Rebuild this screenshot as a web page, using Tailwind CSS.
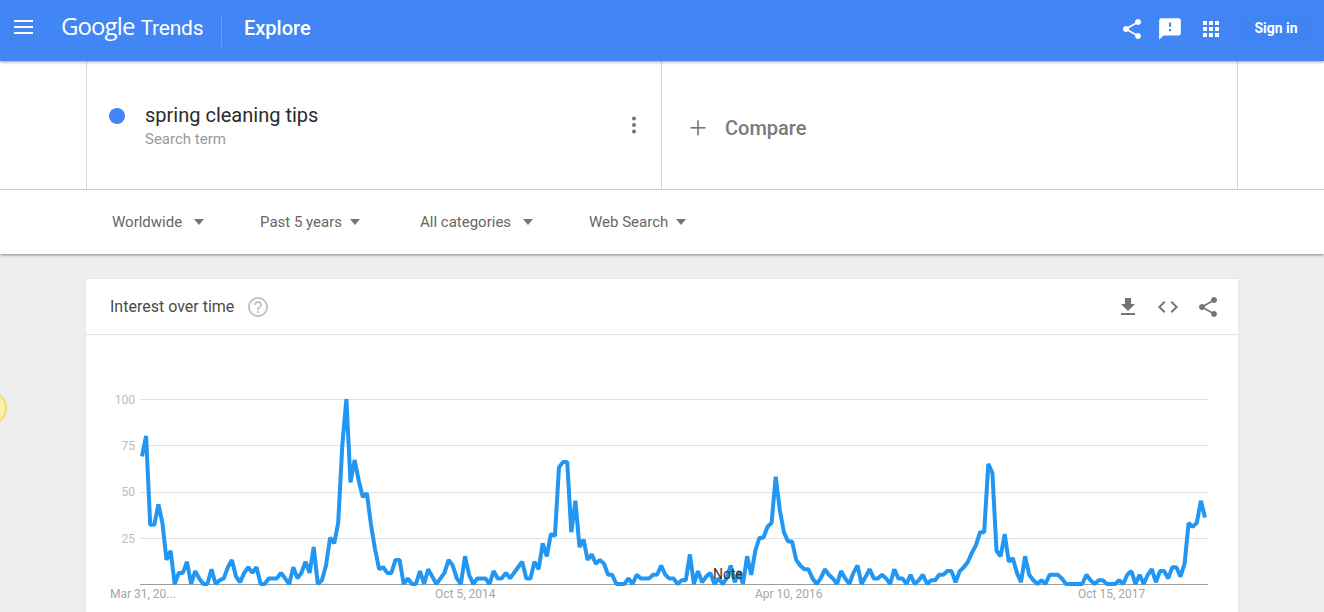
<!DOCTYPE html>
<html lang="en">
<head>
    <meta charset="UTF-8">
    <title>Explore - Google Trends</title>
    <script src="https://cdn.jsdelivr.net/npm/@tailwindcss/browser@4"></script>
</head>
<body class="h-[612px] overflow-hidden bg-[#eeeeee] font-['Roboto',sans-serif] relative">
    <!-- top bar -->
    <header class="relative z-20 h-[61px] pb-[4px] bg-[#4285f4] shadow-[0_1px_3px_rgba(0,0,0,0.4)] flex items-center text-white">
        <svg class="ml-[14px] -mt-[4px] w-[19px] h-[14px]" viewBox="0 0 19 14" fill="#fff"><rect y="0" width="19" height="2"/><rect y="6" width="19" height="2"/><rect y="12" width="19" height="2"/></svg>
        <div class="ml-[28px] -mt-[5px] flex items-baseline w-[160px] font-['Open_Sans',sans-serif] whitespace-nowrap">
            <span class="text-[24px] tracking-[-0.9px]">Google</span>
            <span class="ml-[6px] text-[21px] font-['Roboto',sans-serif] tracking-[-0.2px]">Trends</span>
        </div>
        <div class="w-px h-[32px] mt-[4px] bg-white/20"></div>
        <div class="ml-[22px] -mt-[2px] text-[20px] font-medium">Explore</div>
        <div class="ml-auto flex items-center">
            <svg class="w-[24px] h-[24px]" viewBox="0 0 24 24" fill="#fff"><path d="M18 16.08c-.76 0-1.44.3-1.96.77L8.91 12.7c.05-.23.09-.46.09-.7s-.04-.47-.09-.7l7.05-4.11c.54.5 1.25.81 2.04.81 1.66 0 3-1.34 3-3s-1.34-3-3-3-3 1.34-3 3c0 .24.04.47.09.7L8.04 9.81C7.5 9.31 6.79 9 6 9c-1.66 0-3 1.34-3 3s1.34 3 3 3c.79 0 1.5-.31 2.04-.81l7.12 4.16c-.05.21-.08.43-.08.65 0 1.61 1.31 2.92 2.92 2.92s2.92-1.31 2.92-2.92-1.31-2.92-2.92-2.92z"/></svg>
            <svg class="ml-[13px] w-[26px] h-[26px]" viewBox="0 0 24 24" fill="#fff"><path d="M20 2H4c-1.1 0-2 .9-2 2v18l4-4h14c1.1 0 2-.9 2-2V4c0-1.1-.9-2-2-2zm-7 12h-2v-2h2v2zm0-4h-2V6h2v4z"/></svg>
            <svg class="ml-[16px] w-[24px] h-[24px]" viewBox="0 0 24 24" fill="#fff"><path d="M4 8h4V4H4v4zm6 12h4v-4h-4v4zm-6 0h4v-4H4v4zm0-6h4v-4H4v4zm6 0h4v-4h-4v4zm6-10v4h4V4h-4zm-6 4h4V4h-4v4zm6 6h4v-4h-4v4zm0 6h4v-4h-4v4z"/></svg>
            <div class="ml-[17px] mr-[12px] w-[72px] h-[32px] rounded-[3px] bg-[#4083f2] flex items-center justify-center text-[14px] font-bold">Sign in</div>
        </div>
    </header>

    <!-- search term row -->
    <section class="h-[129px] bg-white border-b border-[#dcdcdc] flex pl-[86px]">
        <div class="w-[575px] border-l border-[#d6d6d6] flex items-start pt-[41px] pl-[22px] pr-[19px]">
            <div class="mt-[6px] w-[16px] h-[16px] rounded-full bg-[#4285f4]"></div>
            <div class="ml-[20px]">
                <div class="text-[20px] leading-[26px] text-[#2b2b2b]">spring cleaning tips</div>
                <div class="text-[15px] leading-[22px] text-[#9a9a9a]">Search term</div>
            </div>
            <svg class="ml-auto mt-[11px] w-[24px] h-[24px] -mr-[4px]" viewBox="0 0 24 24" fill="#757575"><circle cx="12" cy="5.5" r="2"/><circle cx="12" cy="12" r="2"/><circle cx="12" cy="18.5" r="2"/></svg>
        </div>
        <div class="w-[577px] border-x border-[#d6d6d6] flex items-center pt-[5px] pl-[27px]">
            <svg class="w-[18px] h-[18px]" viewBox="0 0 18 18" fill="#757575"><rect x="1.5" y="8" width="15" height="1.6"/><rect x="8.2" y="1.3" width="1.6" height="15"/></svg>
            <span class="ml-[18px] text-[20px] font-medium text-[#7a7a7a]">Compare</span>
        </div>
    </section>

    <!-- filters -->
    <nav class="relative z-10 h-[64px] bg-white shadow-[0_1px_3px_rgba(0,0,0,0.45)] flex items-center pl-[112px] text-[15px] text-[#666666]">
        <span class="w-[70px] whitespace-nowrap">Worldwide</span>
        <span class="ml-[12px] w-0 h-0 border-x-[5.5px] border-x-transparent border-t-[6px] border-t-[#757575]"></span>
        <span class="ml-[56px] w-[81px] whitespace-nowrap">Past 5 years</span>
        <span class="ml-[9px] w-0 h-0 border-x-[5.5px] border-x-transparent border-t-[6px] border-t-[#757575]"></span>
        <span class="ml-[60px] w-[91px] whitespace-nowrap">All categories</span>
        <span class="ml-[12px] w-0 h-0 border-x-[5.5px] border-x-transparent border-t-[6px] border-t-[#757575]"></span>
        <span class="ml-[56px] w-[79px] whitespace-nowrap">Web Search</span>
        <span class="ml-[8px] w-0 h-0 border-x-[5.5px] border-x-transparent border-t-[6px] border-t-[#757575]"></span>
    </nav>

    <!-- edge of the floating yellow bubble -->
    <div class="absolute -left-[27px] top-[391px] w-[34px] h-[34px] rounded-full bg-[#fdf3a6] border-2 border-[#f3dc73]"></div>

    <!-- interest over time card -->
    <main class="ml-[86px] mt-[25px] w-[1152px] h-[340px] bg-white shadow-[0_0_1px_rgba(0,0,0,0.15)]">
        <div class="h-[56px] border-b border-[#e0e0e0] flex items-center pl-[24px] pr-[18px]">
            <span class="text-[16px] text-[#4a4a4a]">Interest over time</span>
            <svg class="ml-[12px] w-[24px] h-[24px]" viewBox="0 0 24 24" fill="#c4c4c4"><path d="M11 18h2v-2h-2v2zm1-16C6.48 2 2 6.48 2 12s4.48 10 10 10 10-4.48 10-10S17.52 2 12 2zm0 18c-4.41 0-8-3.59-8-8s3.59-8 8-8 8 3.59 8 8-3.59 8-8 8zm0-14c-2.21 0-4 1.79-4 4h2c0-1.1.9-2 2-2s2 .9 2 2c0 2-3 1.75-3 5h2c0-2.25 3-2.5 3-5 0-2.21-1.79-4-4-4z"/></svg>
            <div class="ml-auto flex items-center gap-[16px] text-[#757575]">
                <svg class="w-[24px] h-[24px]" viewBox="0 0 24 24" fill="#757575"><path d="M19 9h-4V3H9v6H5l7 7 7-7zM5 18v2h14v-2H5z"/></svg>
                <svg class="w-[24px] h-[24px]" viewBox="0 0 24 24" fill="#757575"><path d="M9.4 16.6 4.8 12l4.6-4.6L8 6l-6 6 6 6 1.4-1.4zm5.2 0 4.6-4.6-4.6-4.6L16 6l6 6-6 6-1.4-1.4z"/></svg>
                <svg class="w-[24px] h-[24px]" viewBox="0 0 24 24" fill="#757575"><path d="M18 16.08c-.76 0-1.44.3-1.96.77L8.91 12.7c.05-.23.09-.46.09-.7s-.04-.47-.09-.7l7.05-4.11c.54.5 1.25.81 2.04.81 1.66 0 3-1.34 3-3s-1.34-3-3-3-3 1.34-3 3c0 .24.04.47.09.7L8.04 9.81C7.5 9.31 6.79 9 6 9c-1.66 0-3 1.34-3 3s1.34 3 3 3c.79 0 1.5-.31 2.04-.81l7.12 4.16c-.05.21-.08.43-.08.65 0 1.61 1.31 2.92 2.92 2.92s2.92-1.31 2.92-2.92-1.31-2.92-2.92-2.92z"/></svg>
            </div>
        </div>
        <!-- chart: svg origin is at page x=86, y=335 -->
        <svg class="block" width="1152" height="284" viewBox="0 0 1152 284">
            <g stroke="#e0e0e0" stroke-width="1">
                <line x1="54" x2="1122" y1="64.5" y2="64.5"/>
                <line x1="54" x2="1122" y1="110.5" y2="110.5"/>
                <line x1="54" x2="1122" y1="157.5" y2="157.5"/>
                <line x1="54" x2="1122" y1="203.5" y2="203.5"/>
            </g>
            <line x1="54" x2="1122" y1="249.5" y2="249.5" stroke="#9e9e9e"/>
            <g font-size="12" fill="#bdbdbd" text-anchor="end">
                <text x="49" y="69">100</text>
                <text x="49" y="115">75</text>
                <text x="49" y="161">50</text>
                <text x="49" y="208">25</text>
            </g>
            <polyline id="trend" fill="none" stroke="#2196f3" stroke-width="4" stroke-linejoin="bevel"/>
            <text x="627" y="244" font-size="14" fill="#333333">Note</text>
            <g font-size="12" fill="#a6a6a6">
                <text x="24" y="263">Mar 31, 20...</text>
                <text x="349" y="263">Oct 5, 2014</text>
                <text x="669" y="263">Apr 10, 2016</text>
                <text x="992" y="263">Oct 15, 2017</text>
            </g>
        </svg>
    </main>

    <script>
        // weekly values read off the chart
        const values = [69,80,32,32,43,33,13,18,0,6,6,12,0,7,3,0,0,8,0,2,3,9,13,4,1,6,9,6,9,0,0,3,3,3,6,3,0,9,3,6,12,6,20,0,2,10,25,22,33,75,100,55,67,56,47,49,32,19,8,9,6,6,13,13,0,3,0,0,7,0,8,4,0,3,6,13,10,3,0,15,5,0,3,3,3,0,7,3,3,6,3,6,9,12,3,3,12,8,22,15,27,26,63,66,66,28,45,20,24,13,16,11,13,11,5,5,0,0,0,3,0,5,3,3,3,5,5,10,5,3,3,0,2,2,16,0,7,1,4,6,0,3,0,3,10,1,7,0,15,5,18,25,25,31,33,58,40,28,23,23,13,10,8,8,3,0,3,8,5,3,0,7,3,0,6,10,0,4,8,3,3,5,3,0,8,3,3,0,5,0,2,5,0,2,2,5,5,7,7,1,7,9,12,17,21,28,28,65,60,18,15,27,12,14,6,1,15,5,2,0,2,0,5,5,5,3,0,0,0,0,0,5,2,0,2,2,0,0,0,2,0,5,7,0,5,0,5,8,1,7,7,3,9,9,4,11,33,31,33,45,36];
        const step = 1063 / (values.length - 1);
        const pts = values.map((v, i) => (56 + i * step).toFixed(1) + ',' + (249 - v * 1.85).toFixed(1));
        document.getElementById('trend').setAttribute('points', pts.join(' '));
    </script>
</body>
</html>
